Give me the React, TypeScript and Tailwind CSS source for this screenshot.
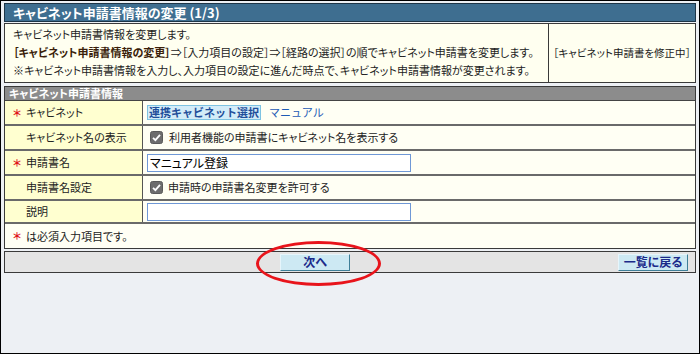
import React from 'react';

type Row = {
  label: string;
  required?: boolean;
  label_h: string;
  children: React.ReactNode;
};

function CheckMark() {
  return (
    <svg width="13" height="13" viewBox="0 0 13 13" className="shrink-0">
      <rect x="0.5" y="0.5" width="12" height="12" rx="2" fill="#6d6d6d" stroke="#5a5a5a" />
      <path d="M3 6.8 L5.4 9.2 L10 3.8" fill="none" stroke="#ffffff" strokeWidth="1.8" />
    </svg>
  );
}

function Req() {
  return <span className="text-[#e0141b] font-bold text-[10px] w-[12px] inline-block">＊</span>;
}

function FormRow({ label, required, label_h, children }: Row) {
  return (
    <div className={`flex border-b-2 border-[#6a6a6a] ${label_h}`}>
      <div className="w-[138px] shrink-0 bg-[#ffffd0] border-r border-[#555] flex items-center pl-[8px] text-[#222]">
        {required ? <Req /> : <span className="w-[12px] inline-block" />}
        <span className="ml-[1px]">{label}</span>
      </div>
      <div className="flex-1 bg-[#fffff4] flex items-center pl-[4px] gap-[5px] text-[11px]">{children}</div>
    </div>
  );
}

export default function App() {
  return (
    <div className="w-[700px] h-[354px] border border-black bg-[#edf0f4] relative overflow-hidden font-['Noto_Sans_CJK_JP',sans-serif] text-[11px] leading-none [font-feature-settings:'palt'] text-[#222]">
      <div className="mx-[3px] mt-[2px]">
        {/* タイトル */}
        <div className="h-[19px] bg-[#3e6e90] border border-[#1d3547] text-white font-bold text-[13px] pl-[8px] flex items-center">
          キャビネット申請書情報の変更 (1/3)
        </div>

        {/* 説明 */}
        <div className="mt-[1px] h-[60px] flex border border-[#3a3a3a] bg-[#fffff0]">
          <div className="flex-1 pl-[8px] pt-[1px] leading-[18px]">
            <div>キャビネット申請書情報を変更します。</div>
            <div>
              <span className="font-bold text-[#3a1e0a]">［キャビネット申請書情報の変更］</span>
              ⇒［入力項目の設定］⇒［経路の選択］の順でキャビネット申請書を変更します。
            </div>
            <div>※キャビネット申請書情報を入力し、入力項目の設定に進んだ時点で、キャビネット申請書情報が変更されます。</div>
          </div>
          <div className="w-[147px] border-l border-[#3a3a3a] flex items-center justify-center text-[10.5px]">
            ［キャビネット申請書を修正中］
          </div>
        </div>

        {/* 申請書情報 */}
        <div className="mt-[3px] border border-[#3a3a3a] border-b-0">
          <div className="h-[14px] bg-[#8c8c8c] text-white font-bold text-[11px] pl-[4px] flex items-center border-b border-[#444]">
            キャビネット申請書情報
          </div>
          <FormRow label="キャビネット" required label_h="h-[25px]">
            <button className="h-[15px] px-[1px] bg-[#d3ecf8] border border-[#7ec3e2] text-[#1f4e9a] font-bold text-[11px] leading-none [font-feature-settings:normal]">
              連携キャビネット選択
            </button>
            <span className="text-[#1e5bb5] text-[11px] ml-[3px] [font-feature-settings:normal]">マニュアル</span>
          </FormRow>
          <FormRow label="キャビネット名の表示" label_h="h-[25px]">
            <span className="ml-[3px]"><CheckMark /></span>
            <span className="ml-[1px]">利用者機能の申請書にキャビネット名を表示する</span>
          </FormRow>
          <FormRow label="申請書名" required label_h="h-[25px]">
            <div className="w-[264px] h-[18px] bg-white border border-[#6f98d6] flex items-center pl-[2px] text-[12px] text-black">
              マニュアル登録
            </div>
          </FormRow>
          <FormRow label="申請書名設定" label_h="h-[25px]">
            <span className="ml-[3px]"><CheckMark /></span>
            <span>申請時の申請書名変更を許可する</span>
          </FormRow>
          <FormRow label="説明" label_h="h-[23px]">
            <div className="w-[264px] h-[18px] bg-white border border-[#6f98d6]" />
          </FormRow>
          <div className="h-[25px] bg-[#fffff4] flex items-center pl-[8px] border-b border-[#3a3a3a]">
            <Req />
            <span className="ml-[1px]">は必須入力項目です。</span>
          </div>
        </div>

        {/* ボタン */}
        <div className="mt-[2px] h-[22px] border border-[#3a3a3a] bg-[#e4e4e4] flex items-center">
          <div className="flex-1 flex justify-center pl-[14px]">
            <button className="w-[70px] h-[17px] bg-[#cde9f3] border border-[#e6f5fb] border-r-[#3f7f98] border-b-[#3f7f98] text-[#1b2a8a] text-[12px] font-bold leading-none">
              次へ
            </button>
          </div>
          <button className="w-[70px] h-[17px] mr-[7px] ml-[7px] bg-[#cde9f3] border border-[#e6f5fb] border-r-[#3f7f98] border-b-[#3f7f98] text-[#1b2a8a] text-[12px] font-bold leading-none">
            一覧に戻る
          </button>
        </div>
      </div>

      {/* 赤丸 */}
      <div className="absolute left-[255px] top-[240px] w-[125px] h-[45px] border-[3px] border-[#e8141b] rounded-[50%]" />
    </div>
  );
}
